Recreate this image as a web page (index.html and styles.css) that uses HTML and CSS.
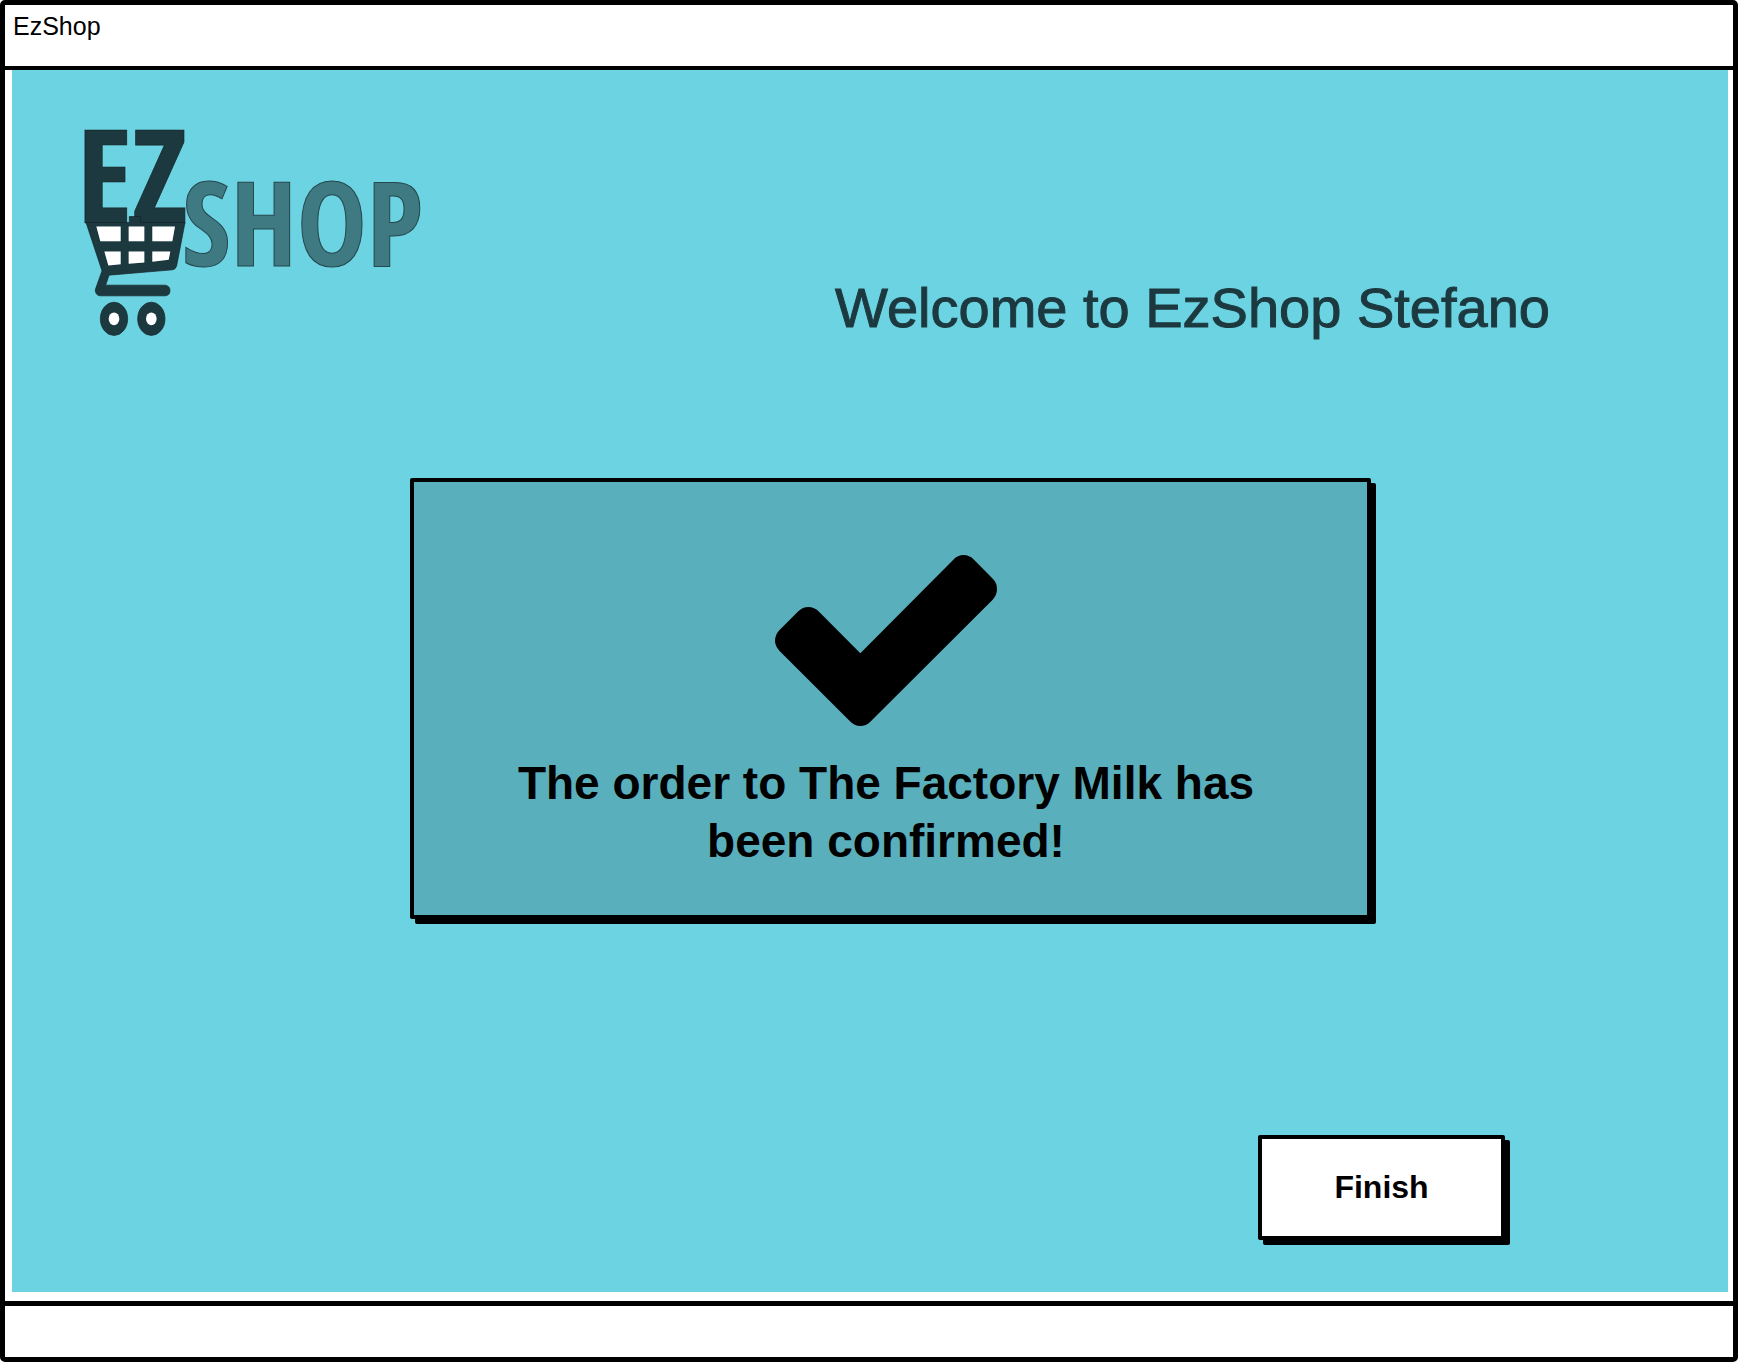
FILE: index.html
```html
<!DOCTYPE html>
<html lang="en">
<head>
<meta charset="utf-8">
<meta name="viewport" content="width=device-width, initial-scale=1">
<title>EzShop</title>
<link rel="stylesheet" href="styles.css">
</head>
<body>
<div class="window">
  <div class="title-bar">EzShop</div>
  <main class="screen">
    <header class="screen-header">
      <svg class="logo" viewBox="48 45 1008 662" role="img" aria-label="EzShop logo">
        <text class="logo-ez" x="20" y="367">EZ</text>
        <text class="logo-shop" x="336" y="499">SHOP</text>
        <path class="logo-cart" fill-rule="evenodd" d="M48 367H178V349H212V367H345L320 497Q317 508 307 509L117 525L107 555H286Q300 558 300 571Q300 585 286 587H90Q75 584 76 568L96 512ZM79 379L91 423H152V379ZM176 379V423H223V379ZM247 379V423H307L315 379ZM103 454L115 496L152 492V454ZM176 454V491L223 487V454ZM247 454V485L296 479L301 454Z"/>
        <path class="logo-gap" d="M79 379L91 423H152V379ZM176 379V423H223V379ZM247 379V423H307L315 379ZM103 454L115 496L152 492V454ZM176 454V491L223 487V454ZM247 454V485L296 479L301 454Z"/>
        <ellipse class="logo-cart" cx="132" cy="656" rx="41" ry="50"/>
        <ellipse class="logo-gap" cx="132" cy="656" rx="16" ry="19"/>
        <ellipse class="logo-cart" cx="244" cy="656" rx="41" ry="50"/>
        <ellipse class="logo-gap" cx="244" cy="656" rx="16" ry="19"/>
      </svg>
      <h1 class="welcome">Welcome to EzShop Stefano</h1>
    </header>
    <section class="confirmation">
      <svg class="check" viewBox="105 102 666 513" aria-hidden="true">
        <path d="M175 271L118 328Q105 342 105 360Q105 374 118 389L330 601Q343 615 361 615Q378 615 391 602L758 236Q771 222 771 205Q771 186 759 174L702 116Q688 102 671 102Q653 102 640 116L361 397L237 272Q223 258 205 258Q188 258 175 271Z"/>
      </svg>
      <p class="message">The order to The Factory Milk has been confirmed!</p>
    </section>
    <div class="actions">
      <button class="finish" type="button">Finish</button>
    </div>
  </main>
  <footer class="status-bar"></footer>
</div>
</body>
</html>
```
FILE: styles.css
```css
* {
  box-sizing: border-box;
}

body {
  margin: 0;
  background: #fff;
  color: #000;
  font-family: "Liberation Sans", Arial, sans-serif;
}

.window {
  display: flex;
  flex-direction: column;
  min-height: 100vh;
  border: 5px solid #000;
  border-radius: 5px;
}

.title-bar {
  height: 65px;
  padding: 6px 8px;
  border-bottom: 4px solid #000;
  font-size: 25px;
  line-height: 30px;
}

.screen {
  display: flex;
  flex: 1;
  flex-direction: column;
  margin: 0 5px 9px 7px;
  padding: 45px 74px 52px;
  background: #6cd3e2;
}

.screen-header {
  display: flex;
  justify-content: space-between;
  align-items: flex-end;
  padding-right: 104px;
}

.logo {
  width: 336px;
  height: 221px;
  overflow: visible;
}

.logo-ez,
.logo-shop {
  font-family: "Noto Sans ExtraCondensed", "Open Sans Condensed", "Roboto Condensed", "Liberation Sans Narrow", "DejaVu Sans Condensed", sans-serif;
  font-weight: 700;
}

.logo-ez {
  fill: #1c393f;
  stroke: #152327;
  stroke-width: 2px;
  font-size: 390px;
}

.logo-shop {
  fill: #3f7982;
  stroke: #26474d;
  stroke-width: 3px;
  font-size: 352px;
}

.logo-cart {
  fill: #1c393f;
  stroke: #152327;
  stroke-width: 2px;
}

.logo-gap {
  fill: #fff;
}

.welcome {
  margin: 0;
  color: #1c393f;
  font-size: 56px;
  font-weight: 400;
  line-height: 56px;
  -webkit-text-stroke: 1px #1c393f;
}

.confirmation {
  display: flex;
  flex-direction: column;
  align-items: center;
  align-self: center;
  gap: 28px;
  width: 100%;
  max-width: 961px;
  margin: 142px 0 60px 40px;
  padding: 73px 88px 45px 80px;
  border: 4px solid #000;
  border-radius: 2px;
  background: #5aafbd;
  box-shadow: 5px 5px 0 #000;
}

.check {
  width: 222px;
  height: 171px;
}

.message {
  margin: 0;
  font-size: 46px;
  font-weight: 700;
  line-height: 58px;
  text-align: center;
}

.actions {
  display: flex;
  justify-content: flex-end;
  margin-top: auto;
  padding-right: 149px;
}

.finish {
  width: 247px;
  height: 105px;
  border: 4px solid #000;
  border-radius: 2px;
  background: #fff;
  box-shadow: 5px 5px 0 #000;
  color: #000;
  font-family: inherit;
  font-size: 32px;
  font-weight: 700;
}

.status-bar {
  height: 56px;
  border-top: 5px solid #000;
}
```
